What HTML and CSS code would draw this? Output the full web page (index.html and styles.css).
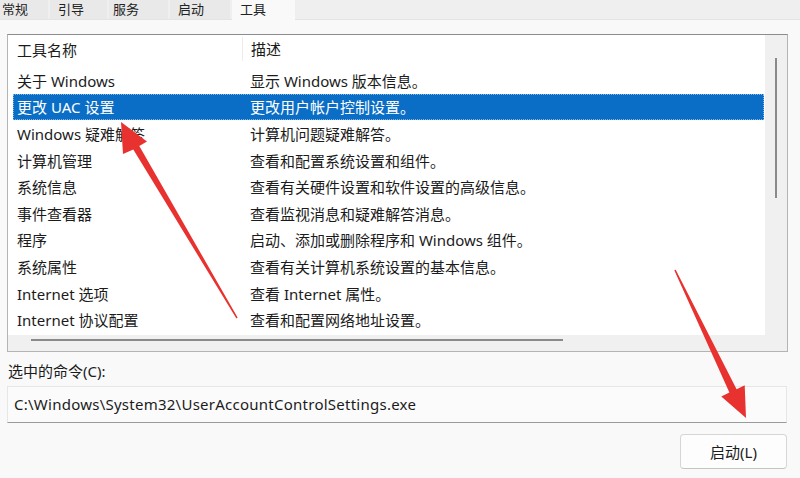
FILE: index.html
```html
<!DOCTYPE html>
<html lang="zh-CN">
<head>
<meta charset="utf-8">
<title>系统配置 - 工具</title>
<link rel="stylesheet" href="styles.css">
</head>
<body>
<div class="page">
  <div class="tabs">
    <div class="tab tab-first">常规</div>
    <div class="tab tab-2">引导</div>
    <div class="tab tab-3">服务</div>
    <div class="tab tab-4">启动</div>
    <div class="tab tab-active">工具</div>
  </div>
  <div class="panel">
    <div class="listbox">
      <div class="list-main">
        <div class="list-content">
          <div class="row header">
            <div class="col1">工具名称</div>
            <div class="col2 sep">描述</div>
          </div>
          <div class="row"><div class="col1">关于 Windows</div><div class="col2">显示 Windows 版本信息。</div></div>
          <div class="row selected"><div class="col1">更改 UAC 设置</div><div class="col2">更改用户帐户控制设置。</div></div>
          <div class="row"><div class="col1">Windows 疑难解答</div><div class="col2">计算机问题疑难解答。</div></div>
          <div class="row"><div class="col1">计算机管理</div><div class="col2">查看和配置系统设置和组件。</div></div>
          <div class="row"><div class="col1">系统信息</div><div class="col2">查看有关硬件设置和软件设置的高级信息。</div></div>
          <div class="row"><div class="col1">事件查看器</div><div class="col2">查看监视消息和疑难解答消息。</div></div>
          <div class="row"><div class="col1">程序</div><div class="col2">启动、添加或删除程序和 Windows 组件。</div></div>
          <div class="row"><div class="col1">系统属性</div><div class="col2">查看有关计算机系统设置的基本信息。</div></div>
          <div class="row"><div class="col1">Internet 选项</div><div class="col2">查看 Internet 属性。</div></div>
          <div class="row"><div class="col1">Internet 协议配置</div><div class="col2">查看和配置网络地址设置。</div></div>
        </div>
        <div class="vscroll"><div class="vthumb"></div></div>
      </div>
      <div class="hscroll"><div class="hthumb"></div></div>
    </div>
    <div class="cmd-label">选中的命令(C):</div>
    <div class="cmd-box">C:\Windows\System32\UserAccountControlSettings.exe</div>
    <div class="actions">
      <button class="btn">启动(L)</button>
    </div>
  </div>
  <svg class="arrows" width="800" height="478" viewBox="0 0 800 478" aria-hidden="true">
    <polygon fill="#e8322f" points="121,122 147,141.5 139.3,146 237.6,317.6 236.4,318.4 133.3,149.6 123,154"/>
    <polygon fill="#e8322f" points="746,418 744.7,385.3 736.6,389.2 675.7,269.7 674.3,270.3 729.4,392.6 721.3,396.5"/>
  </svg>
</div>
</body>
</html>
```

FILE: styles.css
```css
* { box-sizing: border-box; }
html, body {
  margin: 0;
  padding: 0;
}
body {
  width: 800px;
  height: 478px;
  overflow: hidden;
  background: #f9f9f9;
  font-family: "Noto Sans", "Noto Sans CJK SC", sans-serif;
  font-size: 15px;
  color: #1b1b1b;
}
.page {
  position: relative;
  width: 800px;
  height: 478px;
}
.tabs {
  display: flex;
  height: 20px;
  background: #efefef;
  border-bottom: 1px solid #e4e4e4;
  gap: 2px;
}
.tab {
  height: 19px;
  line-height: 19px;
  padding-left: 8px;
  background: #e9e9e9;
  color: #222;
  font-size: 13px;
  white-space: nowrap;
}
.tab-first { width: 48px; padding-left: 2px; }
.tab-2 { width: 57px; }
.tab-3 { width: 59px; padding-left: 4px; }
.tab-4 { width: 60px; }
.tab-active {
  width: 63px;
  height: 20px;
  background: #f9f9f9;
}
.panel {
  padding: 14px 12px 0 7px;
}
.listbox {
  width: 781px;
  height: 318px;
  border: 1px solid #b4b4b4;
  border-top-color: #8c8c8c;
  background: #fff;
  display: flex;
  flex-direction: column;
}
.list-main {
  display: flex;
  height: 300px;
}
.list-content {
  flex: 1;
  padding-left: 5px;
  padding-right: 1px;
}
.vscroll {
  width: 22px;
  background: #f0f0f0;
  padding-top: 23px;
  padding-left: 10px;
}
.vthumb {
  width: 2px;
  height: 140px;
  background: #8a8a8a;
}
.hscroll {
  height: 16px;
  background: #f0f0f0;
  padding: 4px 0 0 23px;
}
.hthumb {
  width: 532px;
  height: 2px;
  background: #8a8a8a;
}
.row {
  display: flex;
  height: 26.6px;
  align-items: center;
  white-space: nowrap;
}
.row.header {
  height: 32px;
  padding-bottom: 4px;
}
.col1 {
  width: 233px;
  padding-left: 4px;
}
.col2 {
  flex: 1;
  padding-left: 4px;
}
.col2.sep {
  border-left: 1px solid #ececec;
  padding-left: 8px;
  height: 24px;
  line-height: 24px;
  margin-left: -4px;
}
.row.selected {
  background: #0b6ec6;
  color: #fff;
  outline: 1px dotted #7fb3e6;
  outline-offset: -1px;
}
.cmd-label {
  margin-top: 9px;
  margin-left: 1px;
  font-size: 15px;
  line-height: 20px;
}
.cmd-box {
  margin-top: 5px;
  width: 780px;
  height: 37px;
  border: 1px solid #e6e6e6;
  border-bottom: 1px solid #9a9a9a;
  background: #fbfbfb;
  padding-left: 6px;
  line-height: 34px;
  font-size: 15px;
  letter-spacing: 0.25px;
  white-space: nowrap;
}
.actions {
  display: flex;
  justify-content: flex-end;
  margin-top: 11px;
  width: 780px;
}
.btn {
  width: 107px;
  height: 35px;
  border: 1px solid #d6d6d6;
  border-bottom-color: #c4c4c4;
  border-radius: 4px;
  background: #fdfdfd;
  font-family: "Noto Sans", "Noto Sans CJK SC", sans-serif;
  font-size: 15px;
  color: #1b1b1b;
  padding: 0;
}
.arrows {
  position: absolute;
  left: 0;
  top: 0;
  pointer-events: none;
}
```
